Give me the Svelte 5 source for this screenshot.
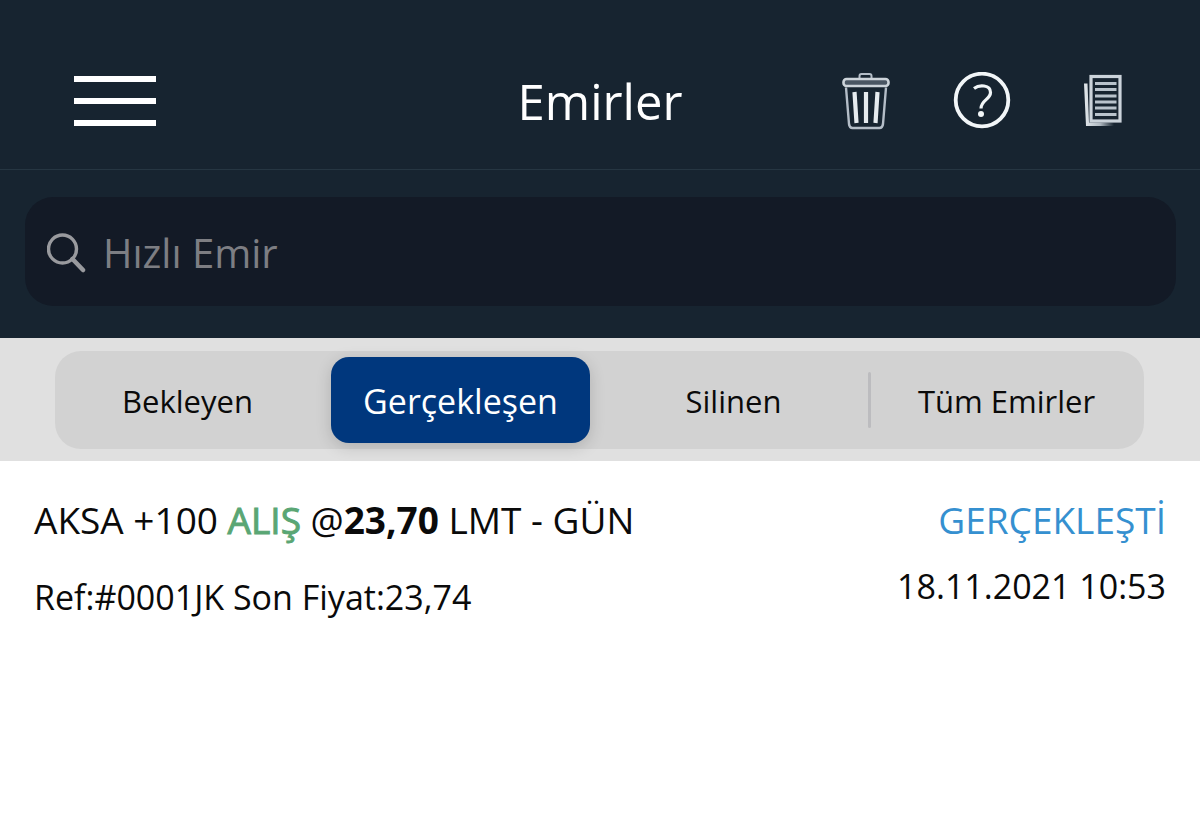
<script>
  const tabs = ["Bekleyen", "Gerçekleşen", "Silinen", "Tüm Emirler"];

  const orders = [
    {
      symbol: "AKSA",
      amount: "+100",
      side: "ALIŞ",
      price: "23,70",
      type: "LMT - GÜN",
      ref: "#0001JK",
      last: "23,74",
      status: "GERÇEKLEŞTİ",
      date: "18.11.2021 10:53",
    },
  ];

  let active = $state(1);
  let query = $state("");
</script>

<header class="topbar">
  <div class="side">
    <button class="icon-btn" aria-label="Menü">
      <svg width="82" height="50" viewBox="0 0 82 50" fill="#fff">
        <rect y="0" width="82" height="6" />
        <rect y="22" width="82" height="6" />
        <rect y="44" width="82" height="6" />
      </svg>
    </button>
  </div>
  <h1>Emirler</h1>
  <div class="side actions">
    <button class="icon-btn" aria-label="Sil">
      <svg width="48" height="58" viewBox="0 0 48 58" fill="none" stroke="#b4bdc7" stroke-width="2" stroke-linejoin="round">
        <path d="M17.500 7V4Q17.500 2 19.500 2H27.500Q29.500 2 29.500 4V7" />
        <rect x="1.500" y="7" width="45" height="7" rx="3" stroke="#cdd4da" stroke-width="2.600" fill="#4a5663" />
        <path d="M4 15.500L7 52Q7.500 56 10.500 56H37.500Q40.500 56 41 52L44 15.500" stroke-width="2.400" />
        <path d="M12.500 20L14.500 51M24 20V51M35.500 20L33.500 51" stroke="#e6ebef" stroke-width="4.200" />
      </svg>
    </button>
    <button class="icon-btn" aria-label="Yardım">
      <svg width="58" height="58" viewBox="0 0 58 58" fill="none" stroke="#f2f6f8">
        <circle cx="29" cy="28" r="26.300" stroke-width="3.800" />
        <path d="M21 16.500C26 12.500 37.500 12.500 37.500 20.500C37.500 27.500 28 28 28 36.500" stroke-width="3.200" />
        <circle cx="28" cy="42" r="3" fill="#f2f6f8" stroke="none" />
      </svg>
    </button>
    <button class="icon-btn" aria-label="Emir listesi">
      <svg width="38" height="54" viewBox="0 0 38 54" fill="none">
        <defs>
          <linearGradient id="pageEdge" gradientUnits="userSpaceOnUse" x1="2" y1="0" x2="30" y2="0">
            <stop offset="0" stop-color="#dde3e7" />
            <stop offset="0.500" stop-color="#b0b9c1" />
            <stop offset="1" stop-color="#b0b9c1" stop-opacity="0" />
          </linearGradient>
        </defs>
        <path d="M0 9.500H3.500L5 48.500H30V52H2Z" fill="url(#pageEdge)" />
        <rect x="7" y="2.500" width="29" height="44.500" stroke="#cbd3da" stroke-width="3.200" />
        <path d="M11 9.500H32.500M11 15.500H32.500M11 22H32.500M11 28H32.500M11 34H32.500M11 40.500H32.500" stroke="#b9c3cc" stroke-width="3" />
      </svg>
    </button>
  </div>
</header>

<div class="search-area">
  <label class="search">
    <svg width="40" height="40" viewBox="0 0 40 40" fill="none" stroke="#999a9e" stroke-width="3.400">
      <circle cx="15.500" cy="16" r="14" />
      <path d="M25.500 26L36 37" stroke-width="4.500" stroke-linecap="round" />
    </svg>
    <input type="text" placeholder="Hızlı Emir" aria-label="Hızlı Emir" bind:value={query} />
  </label>
</div>

<nav class="tab-area">
  <div class="tabs" role="tablist">
    {#each tabs as tab, i}
      {#if i > 0}
        <span class="divider" class:visible={i !== active && i - 1 !== active}></span>
      {/if}
      <button role="tab" aria-selected={i === active} class="tab" class:active={i === active} onclick={() => (active = i)}>
        {tab}
      </button>
    {/each}
  </div>
</nav>

<main>
  {#each orders as order}
    <article class="order">
      <div class="info">
        <p class="title">
          {order.symbol} {order.amount} <span class="buy">{order.side}</span> @<b>{order.price}</b> {order.type}
        </p>
        <p class="detail">Ref:{order.ref} Son Fiyat:{order.last}</p>
      </div>
      <div class="result">
        <p class="title status">{order.status}</p>
        <p class="detail">{order.date}</p>
      </div>
    </article>
  {/each}
</main>

<style>
  :global(body) {
    background: #fff;
    font-family: "Open Sans", "Noto Sans", sans-serif;
    color: #0a0a0a;
  }

  button,
  input {
    font-family: inherit;
    border: none;
    background: none;
    padding: 0;
  }

  button {
    cursor: pointer;
  }

  svg {
    display: block;
    flex: none;
  }

  .topbar {
    display: grid;
    grid-template-columns: 1fr auto 1fr;
    align-items: center;
    box-sizing: border-box;
    height: 170px;
    padding: 32px 74px 0;
    background: #172430;
    border-bottom: 1px solid #263642;
  }

  .side {
    display: flex;
  }

  .actions {
    justify-content: flex-end;
    align-items: center;
    padding-right: 4px;
  }

  .actions .icon-btn:nth-child(2) {
    margin: 0 73px 0 63px;
  }

  h1 {
    margin: 0;
    font-size: 49px;
    line-height: 68px;
    font-weight: 400;
    color: #fff;
  }

  .search-area {
    padding: 27px 24px 32px 25px;
    background: #172430;
  }

  .search {
    display: flex;
    align-items: center;
    gap: 16px;
    box-sizing: border-box;
    height: 109px;
    padding: 2px 22px 0;
    border-radius: 28px;
    background: #131a26;
  }

  .search input {
    flex: 1;
    min-width: 0;
    font-size: 40px;
    line-height: 56px;
    color: #fff;
    outline: none;
  }

  .search input::placeholder {
    color: #7d7e83;
    opacity: 1;
  }

  .tab-area {
    padding: 13px 56px 12px 55px;
    background: #e0e0e0;
  }

  .tabs {
    display: flex;
    align-items: center;
    padding: 6px 8px 6px 3px;
    border-radius: 26px;
    background: #d2d2d2;
  }

  .tab {
    flex: 1 1 0;
    min-width: 0;
    height: 86px;
    padding-top: 2px;
    border-radius: 18px;
    font-size: 31px;
    white-space: nowrap;
    color: #0a0a0a;
  }

  .tab.active {
    background: #00377d;
    color: #fff;
    font-size: 34px;
    box-shadow: 0 4px 16px rgba(0, 0, 0, 0.16);
  }

  .divider {
    width: 3px;
    height: 56px;
    margin: 0 6px 0 5px;
    border-radius: 2px;
  }

  .divider.visible {
    background: #bcbcbf;
  }

  .order {
    display: flex;
    justify-content: space-between;
    padding: 33px 34px;
  }

  .order p {
    margin: 0;
  }

  .title {
    font-size: 37px;
    line-height: 52px;
  }

  .detail {
    font-size: 34px;
    line-height: 48px;
  }

  .info .detail {
    padding-top: 27px;
  }

  .result {
    text-align: right;
  }

  .result .detail {
    padding-top: 16px;
  }

  .buy {
    color: #5aa674;
    -webkit-text-stroke: 1px #5aa674;
  }

  .status {
    color: #3590d0;
  }
</style>
